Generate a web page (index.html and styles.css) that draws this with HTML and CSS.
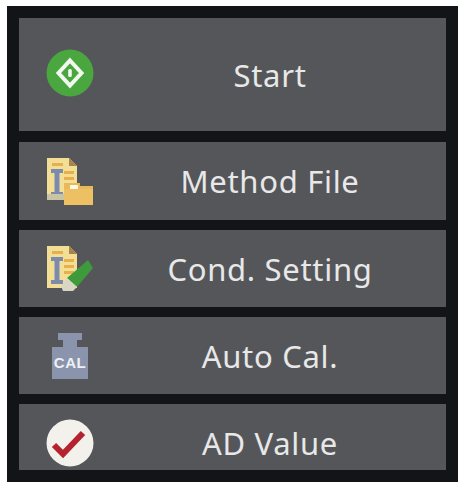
FILE: index.html
```html
<!DOCTYPE html>
<html lang="en">
<head>
<meta charset="utf-8">
<title>Menu</title>
<link rel="stylesheet" href="styles.css">
</head>
<body>
<main class="panel">
  <div class="btn btn-start">
    <svg class="icon" viewBox="0 0 48 48"><circle cx="24" cy="24" r="23.5" fill="#4aa63f"/><path d="M24 11.5 35.5 24 24 36.5 12.5 24Z" fill="none" stroke="#f2f7ef" stroke-width="4"/><rect x="22.2" y="20" width="3.6" height="8" rx="1.5" fill="#f2f7ef"/></svg>
    <span class="label">Start</span>
  </div>
  <div class="btn btn-mid">
    <svg class="icon" viewBox="0 0 48 48"><path d="M1 1H23L31 9V43H1Z" fill="#f3de96"/><path d="M23 1 31 9H23Z" fill="#a8834d"/><path d="M6 6H17V9H6Z M18 14H28V17H18Z M18 20H28V23H18Z M18 26H28V29H18Z" fill="#e6b04f"/><path d="M5 12H17V16H13.5V35H17V39H5V35H8.5V16H5Z" fill="#7c8aab"/><path d="M1 37H18V43H1Z" fill="#c9c4a2"/><path d="M18 26H34V29H47V48H18Z" fill="#e8b95a"/><path d="M18 32H47V48H18Z" fill="#eec064"/><rect x="24" y="28" width="8" height="4" fill="#fff8e6"/></svg>
    <span class="label">Method File</span>
  </div>
  <div class="btn btn-mid">
    <svg class="icon" viewBox="0 0 48 48"><path d="M1 1H23L31 9V43H1Z" fill="#f3de96"/><path d="M23 1 31 9H23Z" fill="#a8834d"/><path d="M6 6H17V9H6Z M18 14H28V17H18Z M18 20H28V23H18Z M18 26H28V29H18Z" fill="#e6b04f"/><path d="M5 12H17V16H13.5V35H17V39H5V35H8.5V16H5Z" fill="#7c8aab"/><path d="M42 15 47 23 31 42 21 33Z" fill="#3f9a3c"/><path d="M21 33 31 42 27 46H17L15 41Z" fill="#d9d6c3"/></svg>
    <span class="label">Cond. Setting</span>
  </div>
  <div class="btn btn-mid">
    <svg class="icon" viewBox="0 0 48 48"><path d="M12 1H36V8H31V15H42V47H6V15H17V8H12Z" fill="#8a94ad"/><text x="24" y="36" class="cal">CAL</text></svg>
    <span class="label">Auto Cal.</span>
  </div>
  <div class="btn btn-last">
    <svg class="icon" viewBox="0 0 48 48"><circle cx="24" cy="24" r="23.5" fill="#f3f1ec"/><path d="M8 26 17 35 37 14" fill="none" stroke="#b5232f" stroke-width="6"/></svg>
    <span class="label">AD Value</span>
  </div>
</main>
</body>
</html>
```
FILE: styles.css
```css
html, body { margin: 0; background: #fff; }
body { padding: 6px 0 0 7px; height: 483px; overflow: hidden; }
.panel {
  box-sizing: border-box;
  width: 451px;
  height: 476px;
  padding: 12px;
  background: #131417;
  display: flex;
  flex-direction: column;
  gap: 10px;
}
.btn {
  display: flex;
  align-items: center;
  padding-left: 27px;
  background: #55565a;
  color: #e8e8e8;
  font-family: "Noto Sans", sans-serif;
  font-size: 31px;
  letter-spacing: 0.7px;
}
.btn-start { box-sizing: border-box; height: 113px; margin-bottom: 1px; padding-bottom: 4px; }
.btn-start .label { padding-top: 4px; }
.btn-mid { height: 77px; }
.btn-mid:nth-child(2) { height: 78px; }
.btn-last { box-sizing: border-box; height: 66px; align-items: flex-start; padding-top: 15px; }
.icon { width: 48px; height: 48px; flex: none; }
.label { flex: 1; text-align: center; line-height: 40px; }
.btn-last .label { padding-top: 4px; }
.cal { font: 700 15px "Liberation Sans", sans-serif; fill: #eef0f4; text-anchor: middle; letter-spacing: 0.5px; }
```
